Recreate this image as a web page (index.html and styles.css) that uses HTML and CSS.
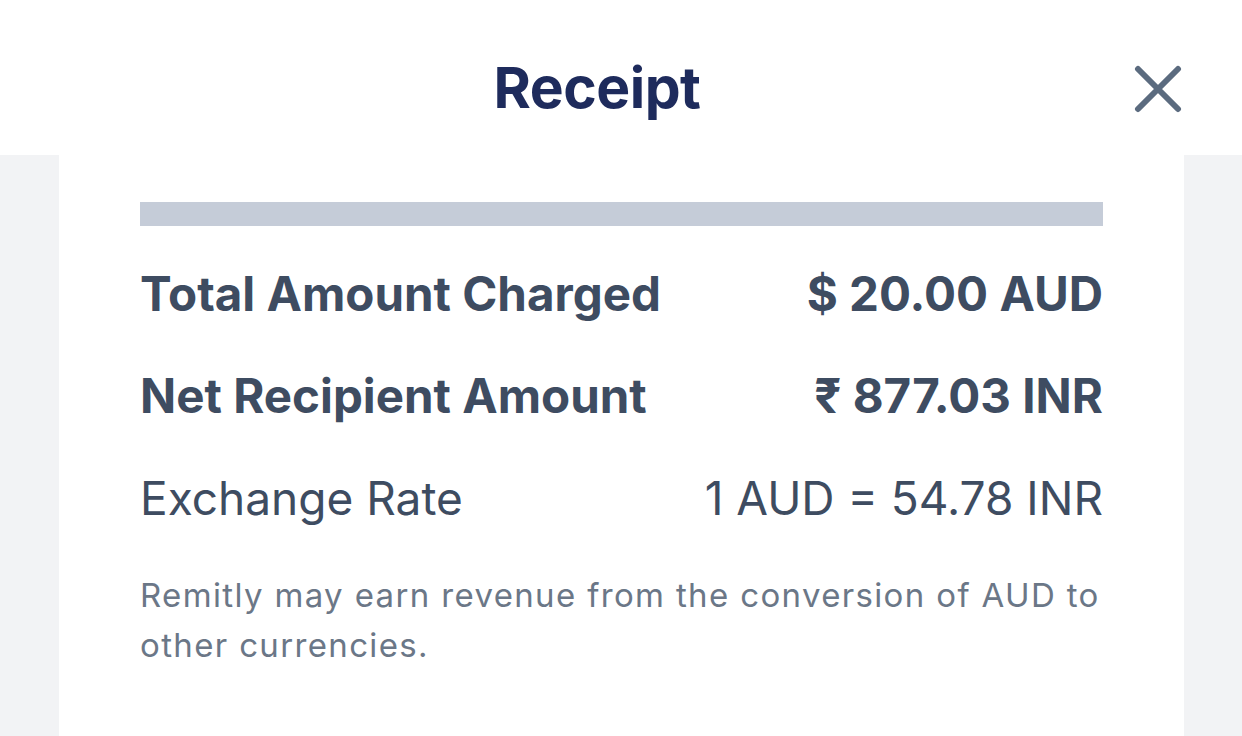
FILE: index.html
```html
<!DOCTYPE html>
<html>
<head>
<meta charset="utf-8">
<link rel="stylesheet" href="styles.css">
</head>
<body>
<header class="header">
  <h1 class="title">Receipt</h1>
  <button class="close" aria-label="Close">
    <svg width="48" height="48" viewBox="0 0 48 48"><path d="M4 4 L44 44 M44 4 L4 44" stroke="#5b6b7f" stroke-width="6" stroke-linecap="round" fill="none"/></svg>
  </button>
</header>
<main class="page">
  <section class="card">
    <div class="bar"></div>
    <div class="row strong"><span>Total Amount Charged</span><span>$ 20.00 AUD</span></div>
    <div class="row strong"><span>Net Recipient Amount</span><span>₹ 877.03 INR</span></div>
    <div class="row"><span>Exchange Rate</span><span>1 AUD = 54.78 INR</span></div>
    <p class="note">Remitly may earn revenue from the conversion of AUD to other currencies.</p>
  </section>
</main>
</body>
</html>
```
FILE: styles.css
```css
html, body {
  margin: 0;
  padding: 0;
}
body {
  width: 1242px;
  height: 736px;
  overflow: hidden;
  background: #f2f3f5;
  font-family: Inter, "Noto Sans", sans-serif;
  display: flex;
  flex-direction: column;
}
.header {
  position: relative;
  height: 155px;
  background: #ffffff;
  display: flex;
  align-items: center;
  justify-content: center;
  padding-right: 48px;
  flex-shrink: 0;
}
.title {
  margin: 0;
  font-size: 57px;
  font-weight: 700;
  color: #1e2b5c;
  letter-spacing: -0.5px;
  position: relative;
  top: 10px;
}
.close {
  position: absolute;
  right: 60px;
  top: 65px;
  width: 48px;
  height: 48px;
  padding: 0;
  border: 0;
  background: none;
  display: block;
}
.close svg { display: block; }
.page {
  flex: 1;
  padding: 0 58px 0 59px;
}
.card {
  background: #ffffff;
  height: 100%;
  padding: 47px 81px 0 81px;
  box-sizing: border-box;
}
.bar {
  height: 24px;
  background: #c5ccd8;
  margin-bottom: 17px;
}
.row {
  display: flex;
  justify-content: space-between;
  align-items: baseline;
  color: #3e4c61;
  font-size: 46px;
  line-height: 102px;
}
.strong {
  font-weight: 700;
  font-size: 47.5px;
}
.note {
  margin: 21px 0 0;
  font-size: 33px;
  letter-spacing: 1.35px;
  line-height: 50px;
  color: #6b7787;
}
```
